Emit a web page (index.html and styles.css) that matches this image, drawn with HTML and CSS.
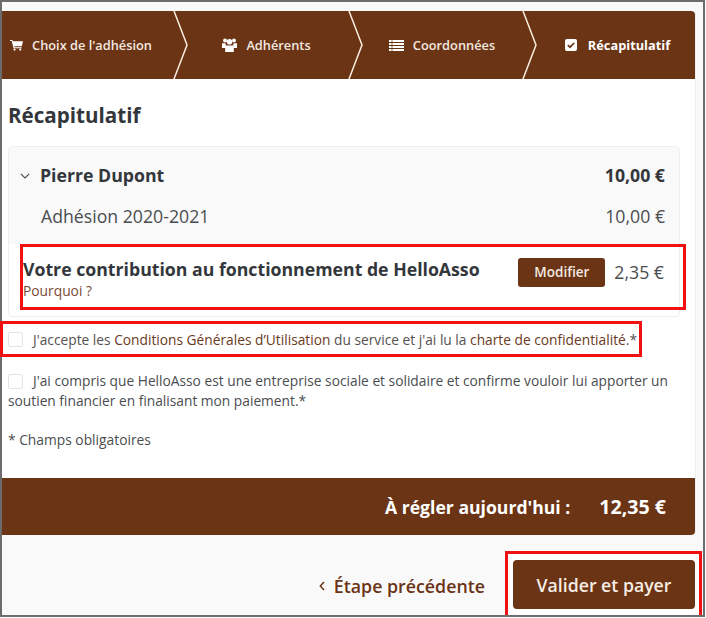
FILE: index.html
```html
<!DOCTYPE html>
<html lang="fr">
<head>
<meta charset="utf-8">
<title>Récapitulatif</title>
<link rel="stylesheet" href="styles.css">
</head>
<body>
<div class="frame">
  <main class="panel">
    <nav class="steps">
      <div class="step step-1">
        <svg class="icon" width="13" height="12" viewBox="0 0 13 12"><path d="M0 1h2.400l.4 1.200H13l-1.200 5H4.200l.3 1.100h7.100v1H3.500L1.700 2H0z" fill="#fff"/><circle cx="4.500" cy="10.600" r="1.100" fill="#fff"/><circle cx="10.300" cy="10.600" r="1.100" fill="#fff"/></svg>
        <span>Choix de l'adhésion</span>
        <svg class="chevron" width="15" height="68" viewBox="0 0 15 68"><path d="M1 0L14 34L1 68" fill="none" stroke="#fbeee0" stroke-width="1.500"/></svg>
      </div>
      <div class="step step-2">
        <svg class="icon" width="15" height="14" viewBox="0 0 15 14"><circle cx="3" cy="2.500" r="2" fill="#fff"/><circle cx="12" cy="2.500" r="2" fill="#fff"/><circle cx="7.500" cy="3.800" r="2.800" fill="#fff"/><path d="M0 5.200h3l1 1.500L3 10H0zM15 5.200h-3l-1 1.500L12 10h3zM4 7.500h7l.8 1V14H3.200V8.500z" fill="#fff"/></svg>
        <span>Adhérents</span>
        <svg class="chevron" width="15" height="68" viewBox="0 0 15 68"><path d="M1 0L14 34L1 68" fill="none" stroke="#fbeee0" stroke-width="1.500"/></svg>
      </div>
      <div class="step step-3">
        <svg class="icon" width="15" height="11" viewBox="0 0 15 11"><path d="M0 0h15v2H0zM0 3h15v2H0zM0 6h15v2H0zM0 9h15v2H0z" fill="#fff"/><path d="M3 0v11" stroke="#6b3415" stroke-width=".7"/></svg>
        <span>Coordonnées</span>
        <svg class="chevron" width="15" height="68" viewBox="0 0 15 68"><path d="M1 0L14 34L1 68" fill="none" stroke="#fbeee0" stroke-width="1.500"/></svg>
      </div>
      <div class="step step-4">
        <svg class="icon" width="12" height="12" viewBox="0 0 12 12"><rect width="12" height="12" rx="2" fill="#fff"/><path d="M2.800 6l2.200 2.200 4.200-4.200" fill="none" stroke="#6b3415" stroke-width="1.700"/></svg>
        <strong>Récapitulatif</strong>
      </div>
    </nav>

    <section class="body">
      <h1 class="title">Récapitulatif</h1>

      <div class="card">
        <div class="card-head">
          <div class="row row-bold">
            <span class="name"><svg class="caret" width="10" height="6" viewBox="0 0 10 6"><path d="M.8.8L5 5l4.200-4.200" fill="none" stroke="#4a4a4a" stroke-width="1.100"/></svg>Pierre Dupont</span>
            <span>10,00 €</span>
          </div>
          <div class="row row-light">
            <span>Adhésion 2020-2021</span>
            <span>10,00 €</span>
          </div>
        </div>
        <div class="contrib">
          <div class="contrib-text">
            <strong>Votre contribution au fonctionnement de HelloAsso</strong>
            <a class="why" href="#">Pourquoi ?</a>
          </div>
          <button class="modify" type="button">Modifier</button>
          <span class="contrib-price">2,35 €</span>
        </div>
      </div>

      <div class="terms">
        <span class="box"></span>
        <span>J'accepte les <a class="tlink" href="#">Conditions Générales d’Utilisation</a> du service et j'ai lu la <a class="tlink" href="#">charte de confidentialité</a>.*</span>
      </div>

      <p class="consent"><span class="box box-inline"></span>J'ai compris que HelloAsso est une entreprise sociale et solidaire et confirme vouloir lui apporter un soutien financier en finalisant mon paiement.*</p>

      <p class="required">* Champs obligatoires</p>
    </section>

    <div class="total">
      <span>À régler aujourd'hui :</span>
      <span class="total-price">12,35 €</span>
    </div>
  </main>

  <footer class="actions">
    <a class="back" href="#"><svg width="6" height="10" viewBox="0 0 6 10"><path d="M5 1L1.300 5L5 9" fill="none" stroke="#6b3415" stroke-width="1.500"/></svg>Étape précédente</a>
    <div class="pay-mark"><button class="pay" type="button">Valider et payer</button></div>
  </footer>
</div>
</body>
</html>
```

FILE: styles.css
```css
* { box-sizing: border-box; }
html, body { margin: 0; padding: 0; }
body {
  width: 706px;
  height: 618px;
  overflow: hidden;
  font-family: "Open Sans", sans-serif;
  color: #3a3d40;
}
.frame {
  width: 705px;
  height: 617px;
  border: 2px solid #6c6c6c;
  background: #f9f9fa;
  padding-top: 9px;
  display: flex;
  flex-direction: column;
}
.panel {
  width: 693px;
  height: 524px;
  background: #fff;
  display: flex;
  flex-direction: column;
  box-shadow: 1px 0 0 #eeeeee;
}
.steps {
  height: 68px;
  flex: none;
  display: flex;
  background: #6b3415;
  border-radius: 0 4px 0 0;
  color: #f3e9e0;
  font-size: 12.800px;
  font-weight: 600;
}
.step {
  position: relative;
  display: flex;
  align-items: center;
  justify-content: center;
  gap: 9px;
  height: 68px;
  white-space: nowrap;
}
.step-1 { width: 172px; padding-right: 14px; }
.step-2 { width: 175px; padding-left: 10px; }
.step-3 { width: 174px; padding-left: 12px; }
.step-4 { width: 172px; padding-left: 17px; gap: 11px; color: #fff; }
.step-4 strong { font-weight: 700; }
.chevron {
  position: absolute;
  top: 0;
  left: 100%;
  z-index: 1;
  margin-left: -1px;
}
.icon { flex: none; }
.body {
  flex: 1;
  padding: 0 6px;
}
.title {
  margin: 21px 0 16px;
  font-size: 20.600px;
  line-height: 30px;
  font-weight: 700;
  color: #33373b;
}
.card {
  width: 672px;
  height: 171px;
  border: 1px solid #eeeeee;
  border-radius: 4px;
  background: #fff;
}
.card-head {
  height: 97px;
  padding: 13px 14px 0 10px;
  background: #f9f9f9;
  border-radius: 4px 4px 0 0;
}
.row {
  display: flex;
  justify-content: space-between;
  font-size: 17.700px;
  line-height: 30px;
}
.row-bold { font-weight: 700; color: #33373b; }
.row-light { margin-top: 11px; padding-left: 22px; color: #4a4d50; }
.name { display: flex; align-items: center; gap: 10px; padding-left: 1px; }
.caret { flex: none; margin-top: 2px; }
.contrib {
  display: flex;
  align-items: center;
  width: 666px;
  height: 66px;
  margin-left: 11px;
  border: 3px solid #f01212;
  padding: 0 19px 3px 0;
}
.contrib-text {
  flex: 1;
  display: flex;
  flex-direction: column;
  margin-top: 6px;
}
.contrib-text strong {
  font-size: 17.700px;
  line-height: 24px;
  color: #33373b;
  white-space: nowrap;
}
.why {
  font-size: 13.800px;
  line-height: 19px;
  color: #7a4a35;
  text-decoration: none;
}
.modify {
  width: 87px;
  height: 29px;
  border: 0;
  border-radius: 3px;
  margin-right: 9px;
  margin-top: -7px;
  background: #6b3415;
  color: #f3e9e0;
  font: 600 13.500px "Open Sans", sans-serif;
}
.contrib-price {
  font-size: 17.700px;
  color: #4a4d50;
  margin-top: -7px;
}
.terms {
  display: flex;
  align-items: center;
  gap: 10px;
  width: 642px;
  height: 36px;
  margin: 4px 0 0 -8px;
  padding-left: 5px;
  border: 3px solid #f01212;
  font-size: 13.750px;
  color: #55514e;
  white-space: nowrap;
}
.tlink { color: #6b3a22; text-decoration: none; }
.box {
  flex: none;
  display: inline-block;
  width: 15px;
  height: 15px;
  border: 1px solid #e4e4e4;
  border-radius: 2px;
  background: #fff;
}
.box-inline { vertical-align: -3px; margin-right: 10px; }
.consent {
  margin: 14px 0 0 0;
  font-size: 13.750px;
  line-height: 20px;
  color: #4a4d50;
  width: 672px;
}
.required {
  margin: 20px 0 0;
  font-size: 13.800px;
  line-height: 18px;
  color: #4a4d50;
}
.total {
  flex: none;
  height: 57px;
  display: flex;
  justify-content: flex-end;
  align-items: center;
  gap: 29px;
  padding-right: 29px;
  background: #6b3415;
  border-radius: 0 0 4px 0;
  color: #fff;
  font-size: 17.600px;
  font-weight: 700;
}
.total-price { font-size: 19.600px; }
.actions {
  flex: 1;
  display: flex;
  justify-content: flex-end;
  align-items: flex-start;
  margin-right: 1px;
}
.back {
  display: flex;
  align-items: center;
  gap: 9px;
  height: 34px;
  margin-top: 34px;
  margin-right: 20px;
  color: #6b3415;
  text-decoration: none;
  font-size: 17.800px;
  font-weight: 600;
}
.pay-mark {
  width: 197px;
  height: 64px;
  margin-top: 16px;
  border: 3px solid #f01212;
  border-bottom: 0;
  padding: 6px 7px 0 5px;
  background: #fff;
}
.pay {
  width: 182px;
  height: 49px;
  border: 0;
  border-radius: 4px;
  background: #6b3415;
  color: #f6ece3;
  font: 600 17.700px "Open Sans", sans-serif;
}
```
